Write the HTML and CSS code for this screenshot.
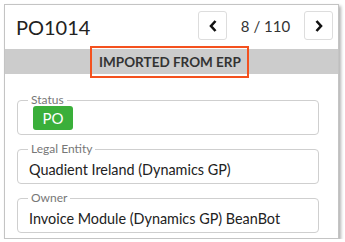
FILE: index.html
```html
<!DOCTYPE html>
<html>
<head>
  <meta charset="utf-8" />
  <title>PO1014</title>
  <link rel="stylesheet" href="styles.css">
</head>
<body>
  <div class="card">
    <div class="header">
      <h1 class="title">PO1014</h1>
      <div class="pager">
        <button class="nav-btn">
          <svg width="8" height="12" viewBox="0 0 8 12"><polyline points="6.5,1 2,6 6.5,11" fill="none" stroke="#111" stroke-width="2.6" stroke-linejoin="miter"/></svg>
        </button>
        <span class="count">8 / 110</span>
        <button class="nav-btn">
          <svg width="8" height="12" viewBox="0 0 8 12"><polyline points="1.5,1 6,6 1.5,11" fill="none" stroke="#111" stroke-width="2.6" stroke-linejoin="miter"/></svg>
        </button>
      </div>
    </div>

    <div class="band">
      <span class="band-label">IMPORTED FROM ERP</span>
    </div>

    <div class="fields">
      <fieldset class="field">
        <legend>Status</legend>
        <div class="value"><span class="badge">PO</span></div>
      </fieldset>
      <fieldset class="field">
        <legend>Legal Entity</legend>
        <div class="value text">Quadient Ireland (Dynamics GP)</div>
      </fieldset>
      <fieldset class="field">
        <legend>Owner</legend>
        <div class="value text">Invoice Module (Dynamics GP) BeanBot</div>
      </fieldset>
    </div>
  </div>
</body>
</html>
```

FILE: styles.css
```css
body {
  margin: 0;
  background: #fff;
  font-family: Lato, "Open Sans", sans-serif;
  color: #222;
}

.card {
  margin: 4px 0 0 4px;
  width: 333px;
  height: 233px;
  border: 1px solid #c4c4c4;
  box-shadow: 2px 2px 3px rgba(0, 0, 0, 0.3);
  overflow: hidden;
}

.header {
  display: flex;
  align-items: center;
  justify-content: space-between;
  height: 44px;
  padding: 0 5px 0 11px;
}

.title {
  margin: 0;
  font-size: 20px;
  font-weight: normal;
  color: #222;
}

.pager {
  display: flex;
  align-items: center;
  margin-top: -3px;
}

.nav-btn {
  display: flex;
  align-items: center;
  justify-content: center;
  width: 29px;
  height: 29px;
  padding: 0;
  background: #fff;
  border: 1px solid #ddd;
  border-radius: 3px;
}

.count {
  width: 77px;
  text-align: center;
  font-size: 15px;
  color: #333;
}

.band {
  display: flex;
  justify-content: center;
  height: 25px;
  margin-right: -4px;
  background: #cccccc;
}

.band-label {
  margin: -3px 0 0 -8px;
  padding: 0 6px 0 7px;
  height: 28px;
  line-height: 28px;
  border: 2px solid #f4511e;
  font-size: 13.5px;
  font-weight: bold;
  color: #333;
  position: relative;
}

.fields {
  padding: 20px 19px 0 12px;
}

.field {
  margin: 0 0 8px 0;
  padding: 0 12px 0 12px;
  height: 41px;
  box-sizing: border-box;
  border: 1px solid #cfcfcf;
  border-radius: 4px;
}

.field legend {
  padding: 0 3px;
  margin-left: -2px;
  font-size: 12px;
  line-height: 12px;
  color: #777;
}

.value {
  height: 24px;
}

.badge {
  display: inline-block;
  width: 40px;
  height: 24px;
  margin-left: 3px;
  line-height: 24px;
  text-align: center;
  background: #3aaf3a;
  color: #fff;
  font-size: 15px;
  border-radius: 3px;
}

.text {
  font-size: 14.4px;
  line-height: 18px;
  padding-top: 6px;
  color: #222;
  margin-left: -1px;
}
```
